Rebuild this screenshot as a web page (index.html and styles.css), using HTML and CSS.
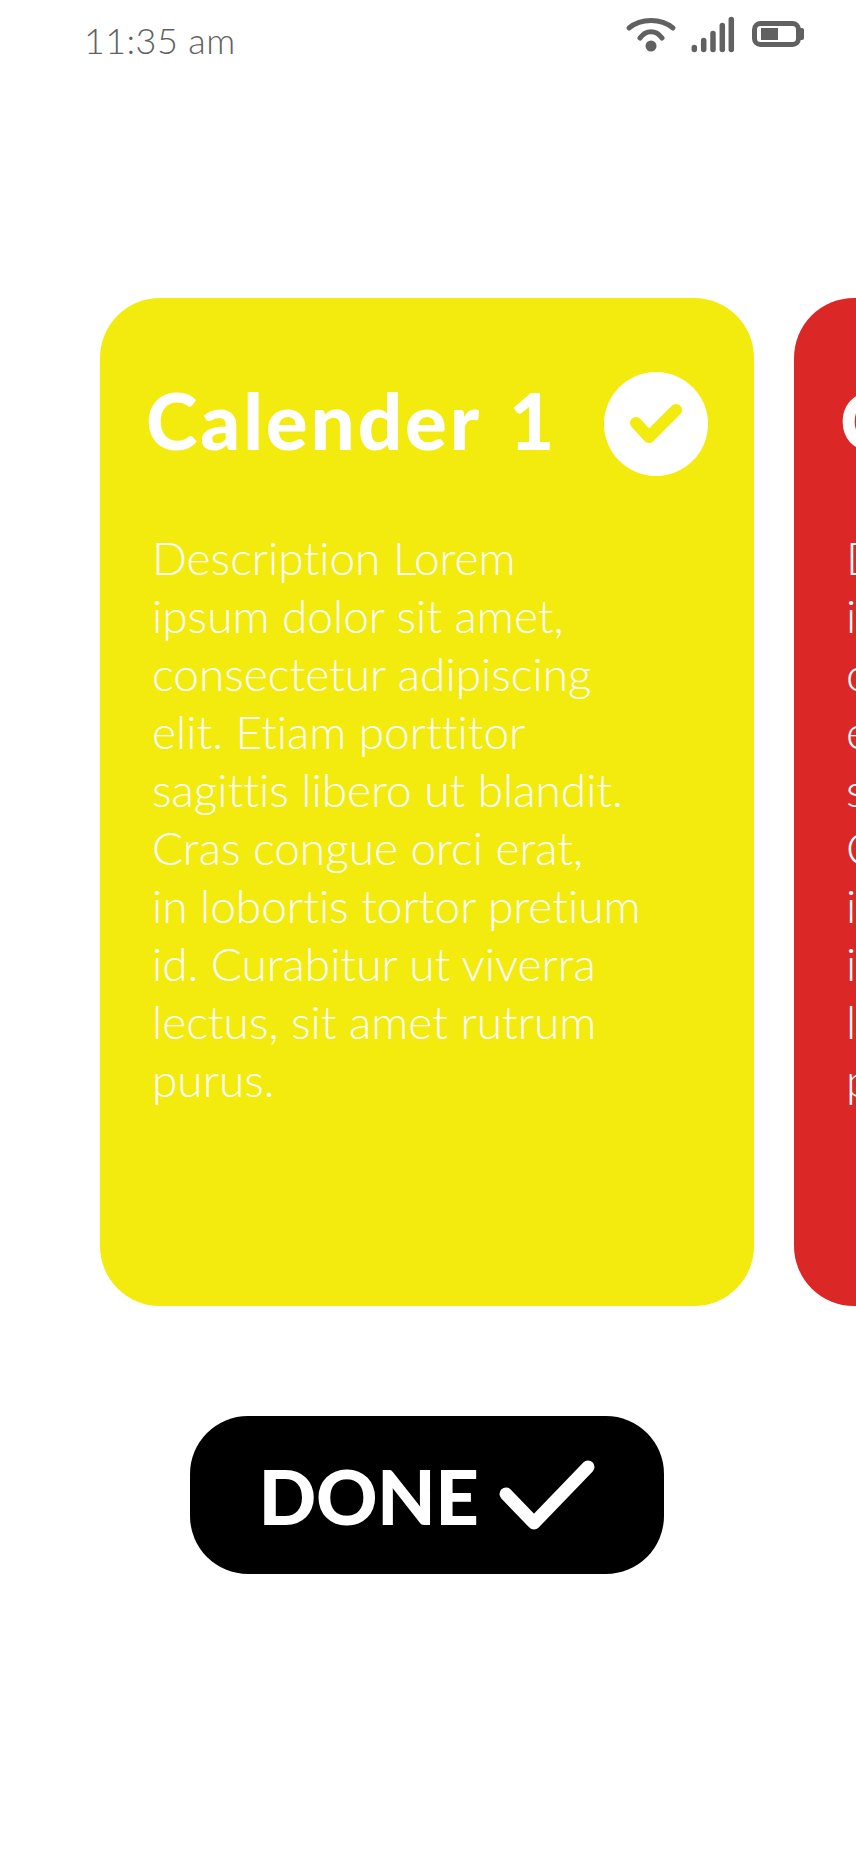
FILE: index.html
```html
<!DOCTYPE html>
<html lang="en">
<head>
<meta charset="utf-8">
<title>Calendars</title>
<link rel="stylesheet" href="styles.css">
</head>
<body>
<div class="screen">
  <header class="status">
    <span class="time">11:35 am</span>
    <div class="status-icons">
      <svg class="ic-wifi" width="56" height="40" viewBox="0 0 56 40"><path d="M5 14 C17 4 37 4 49 14" class="st"/><path d="M16 24 C22 15.5 32 15.5 38 24" class="st"/><circle cx="27" cy="32" r="5.5" class="fl"/></svg>
      <svg class="ic-signal" width="46" height="40" viewBox="0 0 46 40"><path d="M4.3 33.5V35.5M13.7 26.5V35.5M23 19.5V35.5M32.3 11.5V35.5M41.3 5.5V35.5" class="st2"/></svg>
      <svg class="ic-batt" width="56" height="32" viewBox="0 0 56 32"><rect x="4.5" y="5.5" width="44" height="21" rx="6" class="st3"/><rect x="11" y="10" width="17" height="12" class="fl"/><path d="M50 10h2a2 2 0 0 1 2 2v8a2 2 0 0 1-2 2h-2z" class="fl"/></svg>
    </div>
  </header>
  <main class="carousel">
    <section class="card card-yellow">
      <div class="card-head">
        <h2 class="card-title">Calender 1</h2>
        <span class="badge"><svg width="52" height="44" viewBox="0 0 52 44"><path d="M6 21 L19 35 L46 8" class="tick-y"/></svg></span>
      </div>
      <p class="card-text">Description Lorem<br>ipsum dolor sit amet,<br>consectetur adipiscing<br>elit. Etiam porttitor<br>sagittis libero ut blandit.<br>Cras congue orci erat,<br>in lobortis tortor pretium<br>id. Curabitur ut viverra<br>lectus, sit amet rutrum<br>purus.</p>
    </section>
    <section class="card card-red">
      <div class="card-head">
        <h2 class="card-title">Calender 2</h2>
        <span class="badge"></span>
      </div>
      <p class="card-text">Description Lorem<br>ipsum dolor sit amet,<br>consectetur adipiscing<br>elit. Etiam porttitor<br>sagittis libero ut blandit.<br>Cras congue orci erat,<br>in lobortis tortor pretium<br>id. Curabitur ut viverra<br>lectus, sit amet rutrum<br>purus.</p>
    </section>
  </main>
  <div class="actions">
    <button class="done"><span class="done-label">DONE</span><svg width="96" height="70" viewBox="0 0 96 70"><path d="M7 34 L35 63 L89 7" class="tick-w"/></svg></button>
  </div>
</div>
</body>
</html>
```
FILE: styles.css
```css
* { box-sizing: border-box; }
html, body { margin: 0; padding: 0; background: #fff; }
.screen { width: 856px; height: 1852px; overflow: hidden; font-family: "Lato", "Liberation Sans", sans-serif; font-variant-ligatures: none; }
.status { height: 298px; padding: 13px 0 0 84px; display: flex; justify-content: space-between; align-items: flex-start; }
.time { font-size: 36px; line-height: 54px; font-weight: 300; color: #616161; letter-spacing: 0.4px; }
.status-icons { display: flex; align-items: center; padding: 1px 50px 0 0; }
.ic-signal { margin-left: 10px; }
.ic-batt { margin-left: 14px; }
.st, .st2, .st3 { fill: none; stroke: #616161; stroke-linecap: round; }
.st { stroke-width: 5; }
.st2 { stroke-width: 5.5; }
.st3 { stroke-width: 5; }
.fl { fill: #616161; }
.carousel { display: flex; gap: 40px; padding-left: 100px; overflow: hidden; }
.card { flex: 0 0 654px; height: 1008px; border-radius: 60px; padding: 74px 46px 0 46px; color: #fff; }
.card-yellow { background: #f3ea0e; }
.card-red { background: #dc2727; }
.card-head { display: flex; justify-content: space-between; align-items: center; height: 104px; }
.card-title { margin: 0; padding-bottom: 8px; font-size: 78px; font-weight: 900; line-height: 104px; white-space: nowrap; letter-spacing: 2.9px; word-spacing: 7px; }
.badge { width: 104px; height: 104px; border-radius: 50%; background: #fff; display: flex; align-items: center; justify-content: center; flex: none; }
.tick-y { fill: none; stroke: #f3ea0e; stroke-width: 12; stroke-linecap: round; stroke-linejoin: round; }
.card-text { margin: 53px 0 0 6px; font-size: 46px; line-height: 58px; font-weight: 300; white-space: nowrap; }
.actions { display: flex; padding: 110px 0 0 190px; }
.done { width: 474px; height: 158px; border: 0; border-radius: 58px; background: #000; color: #fff; display: flex; align-items: center; justify-content: center; gap: 21px; padding: 0; font-family: inherit; font-size: 76px; font-weight: 900; }
.done-label { letter-spacing: -0.5px; }
.tick-w { fill: none; stroke: #fff; stroke-width: 13; stroke-linecap: round; stroke-linejoin: round; }
```
